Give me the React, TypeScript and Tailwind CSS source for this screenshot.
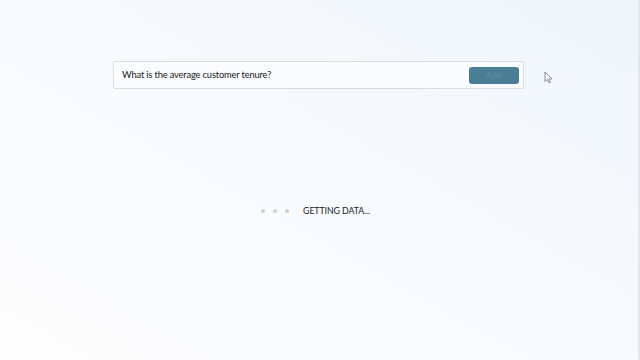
export default function App() {
  return (
    <div
      className="w-[640px] h-[360px] overflow-hidden flex flex-col items-center relative bg-gradient-to-bl from-[#eef5fb] via-[#f8fbfd] to-[#fdfdfe] border-r-2 border-[#e4e8ee]"
      style={{ fontFamily: '"Lato", "Open Sans", sans-serif' }}
    >
      <div className="mt-[61px] ml-[-1px] w-[411px] h-[28px] bg-[#fbfcfd] border border-[#d9dde2] rounded-[2px] flex items-center pl-[8px] pr-[4px]">
        <span className="flex-1 text-[9.3px] text-[#16191f] tracking-[-0.15px]">What is the average customer tenure?</span>
        <button className="w-[50px] h-[17px] rounded-[3px] bg-[#4a7d96] text-[8px] font-bold text-[#5b8ca3] flex items-center justify-center">
          ASK
        </button>
      </div>

      <div className="mt-[115px] flex items-center ml-[-7px]">
        <div className="flex items-center gap-[8px]">
          <span className="w-[4px] h-[4px] rounded-full bg-[#cdd0d4]" />
          <span className="w-[4px] h-[4px] rounded-full bg-[#cdd0d4]" />
          <span className="w-[4px] h-[4px] rounded-full bg-[#cdd0d4]" />
        </div>
        <span className="ml-[14px] text-[8.8px] text-[#16191f] tracking-[-0.1px]">GETTING DATA...</span>
      </div>

      <svg className="absolute left-[544px] top-[71px]" width="9" height="13" viewBox="0 0 9 13">
        <path d="M1 1 L1 10.5 L3.3 8.4 L5 12 L6.4 11.3 L4.8 7.8 L8 7.8 Z" fill="#ffffff" stroke="#6b7078" strokeWidth="0.8" strokeLinejoin="round" />
      </svg>
    </div>
  );
}
